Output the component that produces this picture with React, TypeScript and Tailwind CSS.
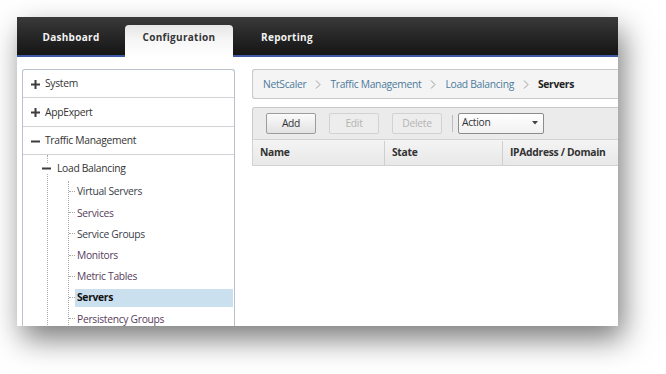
import React from 'react';

const topItems = [
  { label: 'System', open: false, h: 'h-[28px]' },
  { label: 'AppExpert', open: false, h: 'h-[29px]' },
  { label: 'Traffic Management', open: true, h: 'h-[28px]' },
];

const subItems = [
  { label: 'Virtual Servers', visited: false, active: false },
  { label: 'Services', visited: true, active: false },
  { label: 'Service Groups', visited: false, active: false },
  { label: 'Monitors', visited: true, active: false },
  { label: 'Metric Tables', visited: true, active: false },
  { label: 'Servers', visited: false, active: true },
  { label: 'Persistency Groups', visited: true, active: false },
];

const crumbs = ['NetScaler', 'Traffic Management', 'Load Balancing'];

// plus / minus glyph used by the tree
const Toggle: React.FC<{ open: boolean }> = ({ open }) => (
  <svg width="9" height="9" viewBox="0 0 9 9" className="shrink-0">
    <rect x="0" y="3.5" width="9" height="2" fill="#3d3d3d" />
    {!open && <rect x="3.5" y="0" width="2" height="9" fill="#3d3d3d" />}
  </svg>
);

const Chevron = () => (
  <svg width="6" height="9" viewBox="0 0 6 9" className="shrink-0">
    <polyline points="1,0.5 5,4.5 1,8.5" fill="none" stroke="#9a9a9a" strokeWidth="1" />
  </svg>
);

const Tab: React.FC<{ label: string; active?: boolean }> = ({ label, active }) => (
  <div
    className={
      active
        ? 'w-[108px] h-[32px] -mb-[2px] pt-[5px] flex justify-center rounded-t-[4px] bg-gradient-to-b from-[#e6e6e6] via-[#f7f7f7] to-white text-[#353535]'
        : 'w-[108px] h-[32px] -mb-[2px] pt-[5px] flex justify-center text-[#f3f3f3]'
    }
  >
    <span className="text-[10px] leading-[14px] font-bold tracking-[0.3px]">{label}</span>
  </div>
);

const ToolButton: React.FC<{ label: string; disabled?: boolean }> = ({ label, disabled }) => (
  <div
    className={
      disabled
        ? 'w-[50px] h-[21px] flex items-center justify-center rounded-[2px] border border-[#d2d2d2] bg-[#ededed] text-[#b4b4b4]'
        : 'w-[50px] h-[21px] flex items-center justify-center rounded-[2px] border border-[#9c9c9c] bg-gradient-to-b from-[#fbfbfb] to-[#e2e2e2] text-[#333]'
    }
  >
    {label}
  </div>
);

export default function App() {
  return (
    <div className="w-[666px] h-[374px] bg-white pt-[17px] pl-[17px] font-['Open_Sans',sans-serif] text-[10.3px] tracking-[-0.3px]">
      <div className="w-[601px] h-[309px] bg-white overflow-hidden flex flex-col shadow-[5px_13px_28px_rgba(0,0,0,0.52)]">
        {/* top navigation */}
        <div className="h-[40px] shrink-0 flex items-end border-b-2 border-[#3e59a5] bg-gradient-to-b from-[#3a3a3a] to-[#151515]">
          <Tab label="Dashboard" />
          <Tab label="Configuration" active />
          <Tab label="Reporting" />
        </div>

        <div className="flex-1 min-h-0 flex pt-[12px] pl-[5px]">
          {/* navigation tree */}
          <div className="w-[213px] shrink-0 flex flex-col border border-b-0 border-[#b9c2ca] rounded-t-[3px] text-[#333]">
            {topItems.map((item) => (
              <div key={item.label} className={`${item.h} shrink-0 flex items-center gap-[5px] pl-[8px] pt-[1px] border-b border-[#d3d3d3]`}>
                <Toggle open={item.open} />
                <span>{item.label}</span>
              </div>
            ))}
            <div className="flex-1 ml-[24px] border-l border-dotted border-[#a9a9a9]">
              <div className="h-[26px] pt-[1px] flex items-center -ml-[6px]">
                <span className="w-[9px] h-[11px] bg-white flex items-center">
                  <Toggle open />
                </span>
                <span className="ml-[6px]">Load Balancing</span>
              </div>
              <div className="ml-[20px] border-l border-dotted border-[#a9a9a9]">
                {subItems.map((s) => (
                  <div key={s.label} className="h-[21.2px] flex items-center">
                    <div className="w-[6px] border-t border-dotted border-[#a9a9a9]" />
                    <div
                      className={
                        s.active
                          ? 'flex-1 h-[18px] mr-[1px] pl-[2px] pt-[1px] flex items-center bg-[#cbe0ef] font-bold text-[#111]'
                          : `flex-1 h-[18px] mr-[1px] pl-[2px] pt-[1px] flex items-center ${s.visited ? 'text-[#583d5d]' : 'text-[#3b3d48]'}`
                      }
                    >
                      {s.label}
                    </div>
                  </div>
                ))}
              </div>
            </div>
          </div>

          {/* content */}
          <div className="flex-1 min-w-0 ml-[17px] flex flex-col">
            <div className="h-[30px] shrink-0 flex items-center gap-[9px] pl-[10px] pt-[1px] border border-r-0 border-[#c9c9c9] rounded-l-[3px] bg-[#f4f4f4] whitespace-nowrap">
              {crumbs.map((c) => (
                <React.Fragment key={c}>
                  <span className="text-[#4d7a9c]">{c}</span>
                  <Chevron />
                </React.Fragment>
              ))}
              <span className="font-bold text-[#222]">Servers</span>
            </div>

            <div className="mt-[8px] h-[32px] shrink-0 flex items-center pl-[13px] border-t border-l border-[#c9c9c9] rounded-tl-[3px] bg-[#ebebeb]">
              <div className="flex gap-[13px]">
                <ToolButton label="Add" />
                <ToolButton label="Edit" disabled />
                <ToolButton label="Delete" disabled />
              </div>
              <div className="ml-[10px] w-px h-[17px] bg-[#bdbdbd]" />
              <div className="ml-[5px] -mt-[1px] w-[86px] h-[21px] flex items-center justify-between pl-[3px] pr-[5px] rounded-[2px] border border-[#8c8c8c] bg-gradient-to-b from-white to-[#f1f1f1] text-[#333]">
                <span>Action</span>
                <svg width="6" height="4" viewBox="0 0 6 4">
                  <polygon points="0,0 6,0 3,3.5" fill="#444" />
                </svg>
              </div>
            </div>

            <div className="h-[27px] shrink-0 flex pt-[1px] border-t border-l border-b border-[#d2d2d2] bg-gradient-to-b from-[#f4f4f4] to-[#e8e8e8] font-bold text-[#333] whitespace-nowrap">
              <div className="w-[132px] pl-[7px] flex items-center border-r border-[#cfcfcf]">Name</div>
              <div className="w-[118px] pl-[7px] flex items-center border-r border-[#cfcfcf]">State</div>
              <div className="flex-1 pl-[7px] flex items-center">IPAddress / Domain</div>
            </div>
            <div className="flex-1 bg-white" />
          </div>
        </div>
      </div>
    </div>
  );
}
